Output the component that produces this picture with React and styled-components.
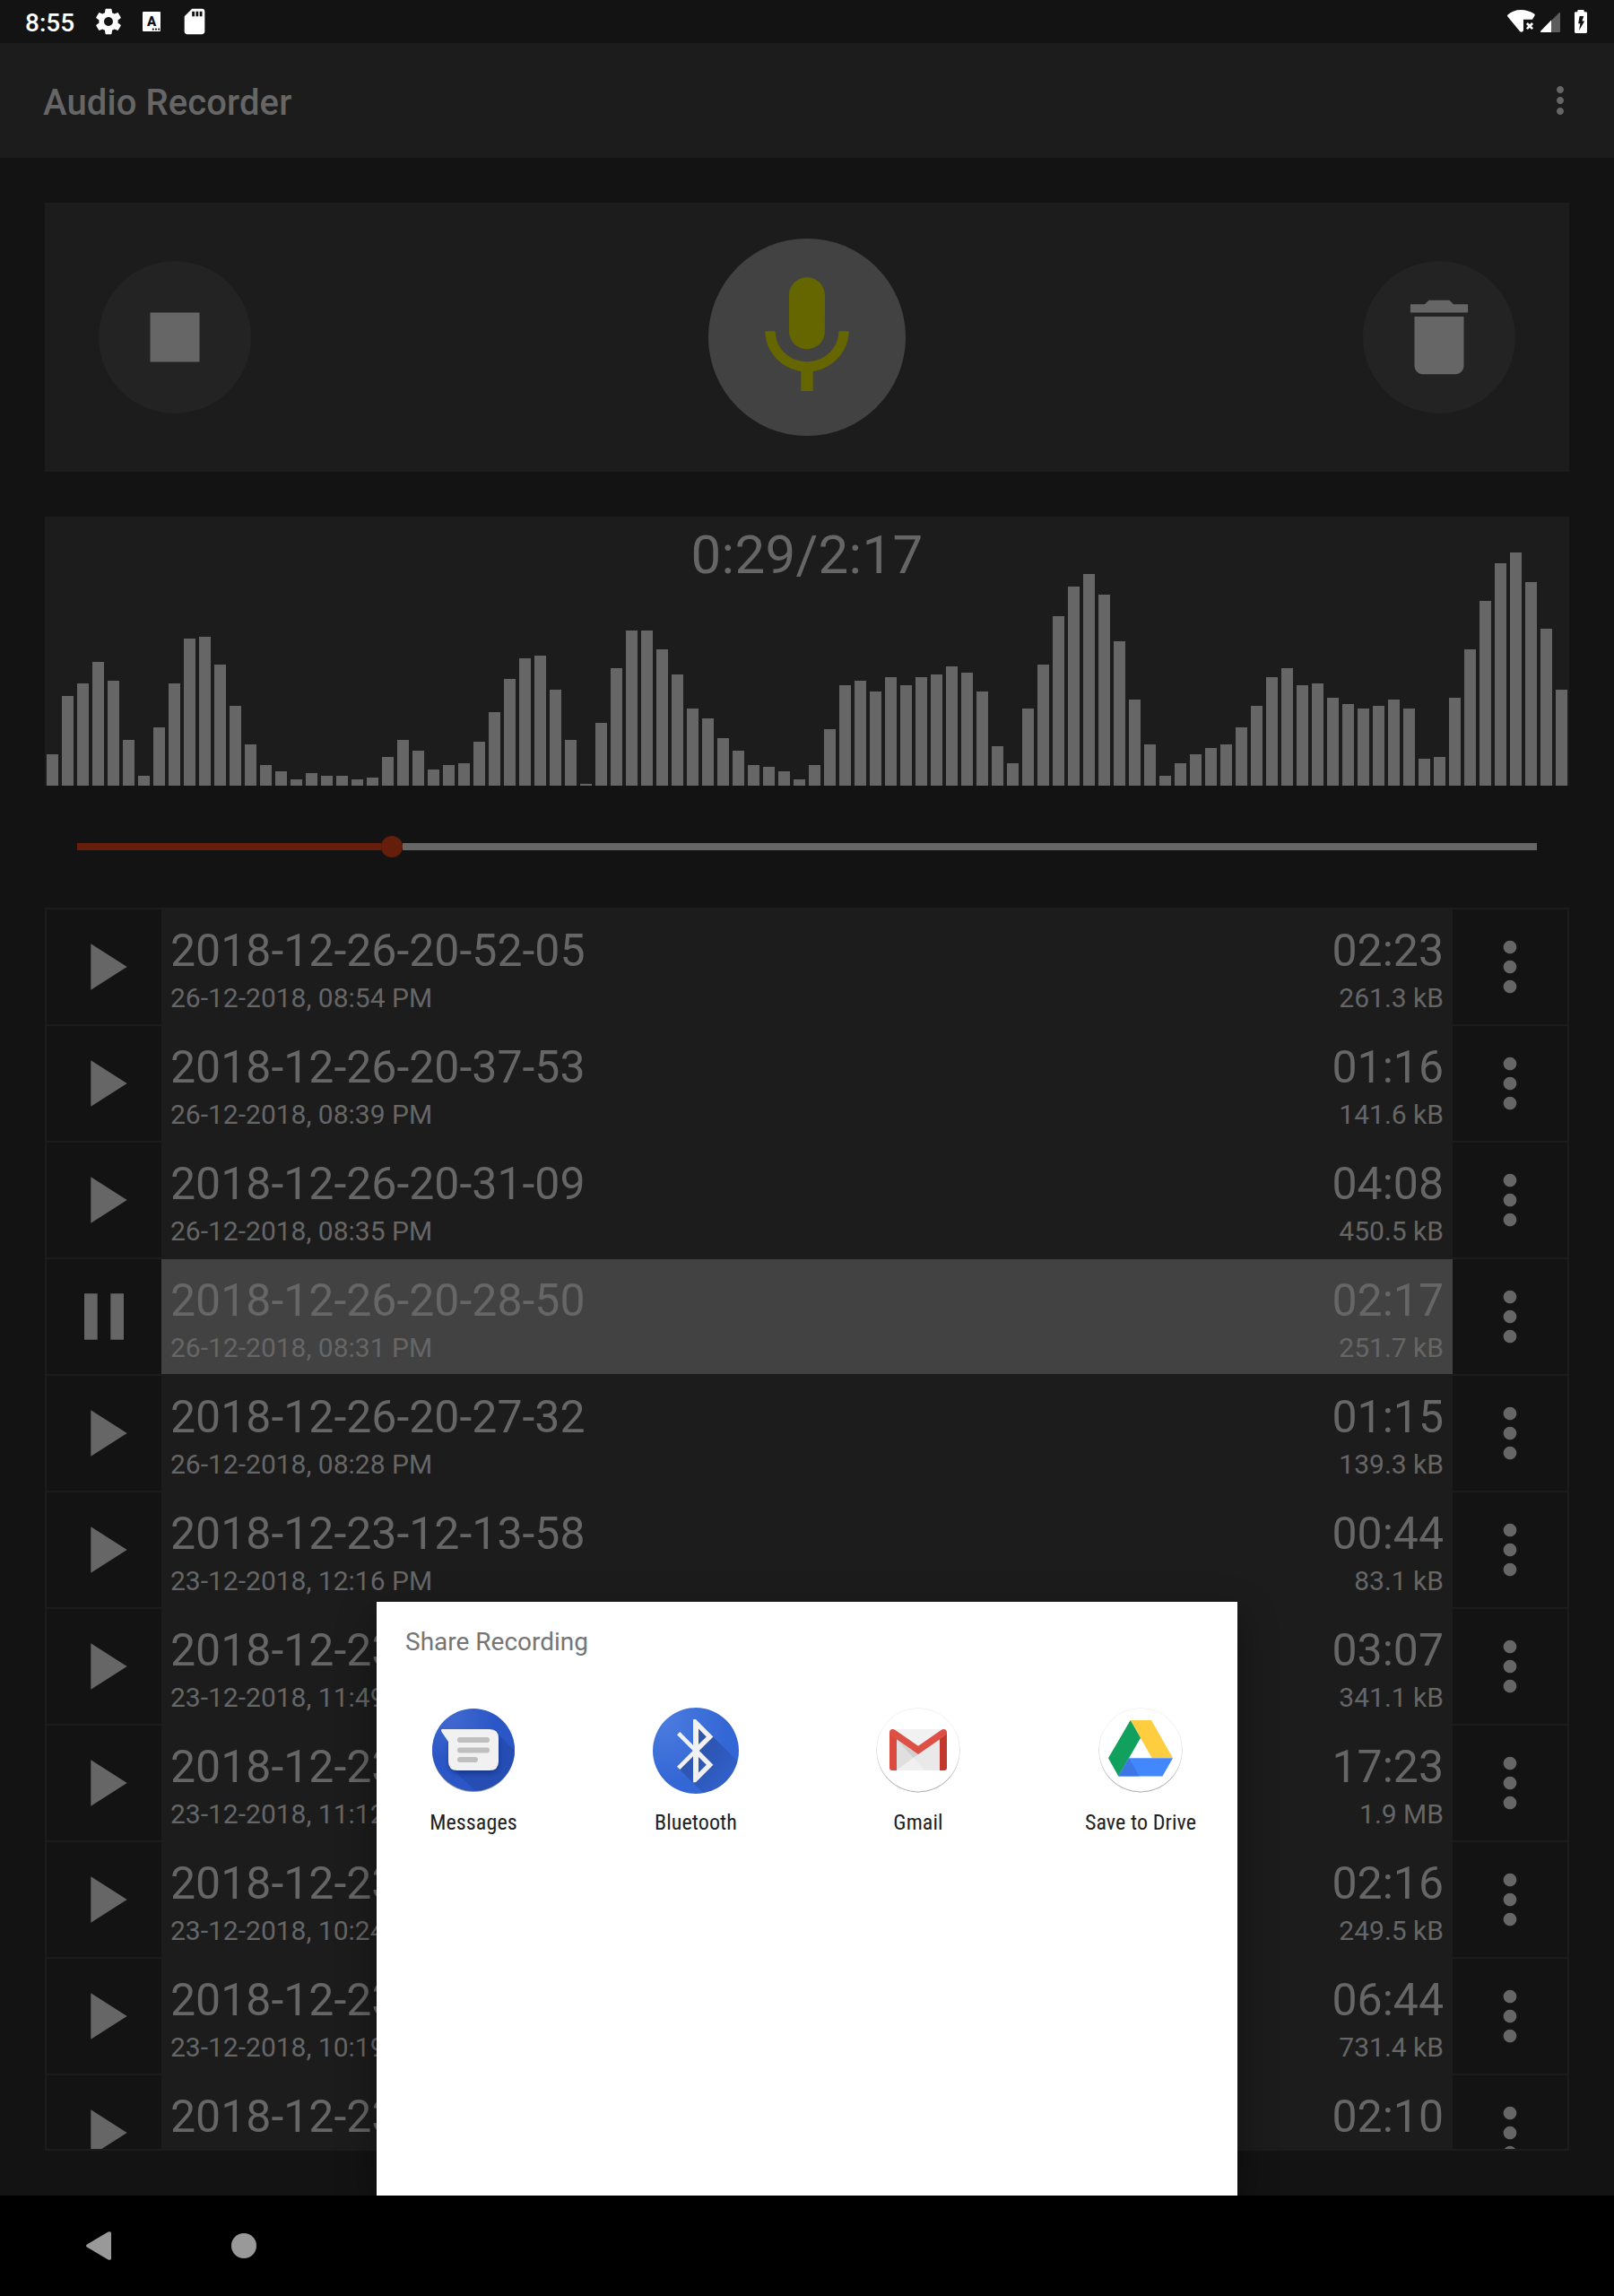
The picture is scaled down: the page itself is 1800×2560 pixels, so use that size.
import React from "react";
import styled, { createGlobalStyle } from "styled-components";

const GlobalStyle = createGlobalStyle`
  html, body { margin: 0; padding: 0; background: #131313; }
  *, *::before, *::after { box-sizing: border-box; }
`;

const Screen = styled.div`
  position: relative;
  display: flex;
  flex-direction: column;
  width: 1800px;
  height: 2560px;
  overflow: hidden;
  background: #131313;
  color: #666666;
  font-family: Roboto, "Noto Sans", sans-serif;
`;

const StatusBar = styled.header`
  display: flex;
  align-items: center;
  justify-content: space-between;
  flex: none;
  height: 48px;
  padding: 0 30px 0 28px;
  color: #ffffff;
`;

const StatusGroup = styled.div`
  display: flex;
  align-items: center;
  gap: ${(p) => p.$gap}px;
`;

const Clock = styled.span`
  width: 76px;
  padding-top: 4px;
  font-size: 28px;
  font-weight: 500;
  line-height: 34px;
`;

const Glyph = styled.svg`
  display: block;
  flex: none;
  width: ${(p) => p.$w}px;
  height: ${(p) => p.$h || p.$w}px;
`;

const AppBar = styled.div`
  display: flex;
  align-items: center;
  justify-content: space-between;
  flex: none;
  height: 128px;
  padding: 4px 36px 0 48px;
  background: #1c1c1c;
`;

const AppTitle = styled.h1`
  margin: 2px 0 0;
  font-size: 40px;
  font-weight: 500;
  letter-spacing: 0.1px;
  line-height: 48px;
`;

const AppMenu = styled.div`
  margin-top: -4px;
`;

const Content = styled.main`
  display: flex;
  flex-direction: column;
  flex: 1;
  min-height: 0;
  padding: 50px;
`;

const Controls = styled.section`
  display: flex;
  align-items: center;
  justify-content: space-between;
  flex: none;
  height: 300px;
  padding: 0 60px;
  background: #1c1c1c;
`;

const RoundButton = styled.div`
  display: flex;
  align-items: center;
  justify-content: center;
  width: ${(p) => p.$size}px;
  height: ${(p) => p.$size}px;
  border-radius: 50%;
  background: ${(p) => (p.$active ? "#424242" : "#232323")};
  color: ${(p) => (p.$active ? "#666600" : "#666666")};
`;

const WavePanel = styled.section`
  display: grid;
  flex: none;
  height: 300px;
  margin-top: 50px;
  background: #1c1c1c;
`;

const Timer = styled.div`
  grid-area: 1 / 1;
  justify-self: center;
  margin-top: 7px;
  font-size: 60px;
  letter-spacing: 0.3px;
  line-height: 72px;
`;

const Bars = styled.div`
  grid-area: 1 / 1;
  display: flex;
  align-items: flex-end;
  gap: 4px;
  padding: 0 2px;
`;

const Bar = styled.i`
  flex: none;
  width: 13px;
  background: #666666;
`;

const Seek = styled.div`
  display: flex;
  align-items: center;
  flex: none;
  height: 24px;
  margin: 56px 36px;
`;

const Played = styled.div`
  width: 339px;
  height: 8px;
  background: #661e0c;
`;

const Thumb = styled.div`
  width: 24px;
  height: 24px;
  border-radius: 50%;
  background: #661e0c;
`;

const Remaining = styled.div`
  flex: 1;
  height: 8px;
  background: #666666;
`;

const List = styled.section`
  flex: 1;
  min-height: 0;
  overflow: hidden;
  border: 2px solid #1c1c1c;
`;

const Row = styled.div`
  display: grid;
  grid-template-columns: 128px 1fr 128px;
  height: 130px;
  border-bottom: 2px solid #1c1c1c;
`;

const Cell = styled.div`
  display: flex;
  align-items: center;
  justify-content: center;
`;

const Info = styled.div`
  display: flex;
  justify-content: space-between;
  padding: 16px 10px 0;
  background: ${(p) => (p.$playing ? "#424242" : "#1c1c1c")};
`;

const Lines = styled.div`
  display: flex;
  flex-direction: column;
  gap: 5px;
  text-align: ${(p) => (p.$end ? "right" : "left")};
  white-space: nowrap;
`;

const Primary = styled.div`
  font-size: 50px;
  line-height: 60px;
`;

const Secondary = styled.div`
  font-size: 30px;
  line-height: 36px;
`;

const NavBar = styled.footer`
  position: relative;
  z-index: 2;
  display: flex;
  align-items: center;
  flex: none;
  gap: 134px;
  height: 112px;
  padding-left: 96px;
  background: #000000;
`;

const HomeDot = styled.div`
  width: 28px;
  height: 28px;
  border-radius: 50%;
  background: #999999;
`;

const Sheet = styled.div`
  position: absolute;
  z-index: 1;
  left: 420px;
  bottom: 112px;
  width: 960px;
  height: 662px;
  background: #ffffff;
  box-shadow: 0 16px 40px rgba(0, 0, 0, 0.4);
`;

const SheetTitle = styled.div`
  padding: 28px 32px 0;
  color: #757575;
  font-size: 28px;
  line-height: 34px;
`;

const Targets = styled.div`
  display: grid;
  grid-template-columns: repeat(4, 216px);
  gap: 32px;
  margin-top: 56px;
`;

const Target = styled.div`
  display: flex;
  flex-direction: column;
  align-items: center;
`;

const TargetName = styled.div`
  margin-top: 17px;
  color: #212121;
  font-family: "Roboto Condensed", Roboto, sans-serif;
  font-size: 24px;
  font-stretch: condensed;
  letter-spacing: 0.1px;
  line-height: 30px;
  white-space: nowrap;
`;

const MATERIAL = {
  play: "M8 5v14l11-7z",
  pause: "M6 19h4V5H6v14zm8-14v14h4V5h-4z",
  stop: "M6 6h12v12H6z",
  more: "M12 8c1.1 0 2-.9 2-2s-.9-2-2-2-2 .9-2 2 .9 2 2 2zm0 2c-1.1 0-2 .9-2 2s.9 2 2 2 2-.9 2-2-.9-2-2-2zm0 6c-1.1 0-2 .9-2 2s.9 2 2 2 2-.9 2-2-.9-2-2-2z",
  mic: "M12 14c1.66 0 2.99-1.34 2.99-3L15 5c0-1.66-1.34-3-3-3S9 3.34 9 5v6c0 1.66 1.34 3 3 3zm5.3-3c0 3-2.54 5.1-5.3 5.1S6.7 14 6.7 11H5c0 3.41 2.72 6.23 6 6.72V21h2v-3.28c3.28-.48 6-3.3 6-6.72h-1.7z",
  trash: "M6 19c0 1.1.9 2 2 2h8c1.1 0 2-.9 2-2V7H6v12zM19 4h-3.5l-1-1h-5l-1 1H5v2h14V4z",
  gear: "M19.43 12.98c.04-.32.07-.64.07-.98s-.03-.66-.07-.98l2.11-1.65c.19-.15.24-.42.12-.64l-2-3.46c-.12-.22-.39-.3-.61-.22l-2.49 1c-.52-.4-1.08-.73-1.69-.98l-.38-2.65C14.46 2.18 14.25 2 14 2h-4c-.25 0-.46.18-.49.42l-.38 2.65c-.61.25-1.17.59-1.69.98l-2.49-1c-.23-.09-.49 0-.61.22l-2 3.46c-.13.22-.07.49.12.64l2.11 1.65c-.04.32-.07.65-.07.98s.03.66.07.98l-2.11 1.65c-.19.15-.24.42-.12.64l2 3.46c.12.22.39.3.61.22l2.49-1c.52.4 1.08.73 1.69.98l.38 2.65c.03.24.24.42.49.42h4c.25 0 .46-.18.49-.42l.38-2.65c.61-.25 1.17-.59 1.69-.98l2.49 1c.23.09.49 0 .61-.22l2-3.46c.12-.22.07-.49-.12-.64l-2.11-1.65zM12 15.5c-1.93 0-3.5-1.57-3.5-3.5s1.57-3.5 3.5-3.5 3.5 1.57 3.5 3.5-1.57 3.5-3.5 3.5z",
  sd: "M18 2h-8L4.02 8 4 20c0 1.1.9 2 2 2h12c1.1 0 2-.9 2-2V4c0-1.1-.9-2-2-2zm-6 6h-2V4h2v4zm3 0h-2V4h2v4zm3 0h-2V4h2v4z",
};

function Icon({ name, size }) {
  return (
    <Glyph $w={size} viewBox="0 0 24 24" fill="currentColor">
      <path d={MATERIAL[name]} />
    </Glyph>
  );
}

function KeyboardIcon() {
  return (
    <Glyph $w={34} viewBox="0 0 34 34">
      <rect x="7" y="6" width="20" height="22" rx="1" fill="#ffffff" />
      <text x="17" y="22" textAnchor="middle" fontFamily="Roboto, sans-serif" fontWeight="900" fontSize="15" fill="#131313">A</text>
      <g fill="#131313">
        <circle cx="18.8" cy="25.7" r="1.1" />
        <circle cx="22" cy="25.7" r="1.1" />
        <circle cx="25.2" cy="25.7" r="1.1" />
      </g>
    </Glyph>
  );
}

function WifiIcon() {
  return (
    <Glyph $w={34} $h={28} viewBox="0 0 34 28">
      <path d="M1.2 6.8 Q7.5 1 16 1 T31.2 5.6 Q32.2 6.6 31.5 7.6 L28.9 11.7 H19 V24.2 Q16.8 27 15 25 L1.4 8.4 Q.7 7.4 1.2 6.8Z" fill="#ffffff" />
      <path d="M22.9 16 L29.1 22.2 M29.1 16 L22.9 22.2" stroke="#ffffff" strokeWidth="2.6" />
    </Glyph>
  );
}

function SignalIcon() {
  return (
    <Glyph $w={24} $h={28} viewBox="0 0 24 28">
      <path d="M13 14 L22.5 4.5 Q24 3.5 24 5 V25 Q24 26 23 26 H13Z" fill="#5c5c5c" />
      <path d="M14 12.6 V26 H3 Q1.2 26 2.3 24.4Z" fill="#ffffff" />
    </Glyph>
  );
}

function BatteryIcon() {
  return (
    <Glyph $w={14} $h={28} viewBox="0 0 14 28">
      <path d="M1.5 3.2 H3.3 V2 Q3.3 1 4.3 1 H9.7 Q10.7 1 10.7 2 V3.2 H12.5 Q14 3.2 14 4.6 V25.6 Q14 27 12.7 27 H1.3 Q0 27 0 25.6 V4.6 Q0 3.2 1.5 3.2Z" fill="#ffffff" />
      <path d="M5.6 8 H10.2 L8.4 13.6 H11.2 L5 24 L6.4 16.2 H4.2Z" fill="#131313" />
    </Glyph>
  );
}

function MessagesIcon() {
  return (
    <Glyph $w={96} viewBox="0 0 96 96">
      <defs>
        <radialGradient id="msgFace" cx="0.25" cy="0.12" r="0.9">
          <stop offset="0" stopColor="#4068cf" />
          <stop offset="0.6" stopColor="#2a56c6" />
        </radialGradient>
        <clipPath id="msgClip"><circle cx="48" cy="47" r="46" /></clipPath>
        <filter id="soft" x="-20%" y="-20%" width="140%" height="140%"><feGaussianBlur stdDeviation="2.4" /></filter>
        <filter id="rim" x="-20%" y="-20%" width="140%" height="140%"><feGaussianBlur stdDeviation="0.7" /></filter>
      </defs>
      <circle cx="48" cy="48" r="46" fill="#000000" opacity="0.4" filter="url(#rim)" />
      <circle cx="48" cy="47" r="46" fill="url(#msgFace)" />
      <g clipPath="url(#msgClip)">
        <path d="M73 27 L110 64 V110 H69 L23 67Z" fill="#1d3d90" opacity="0.35" />
        <rect x="21" y="30" width="55" height="43" rx="10" fill="#10265f" opacity="0.55" filter="url(#soft)" />
      </g>
      <path d="M13 24 H66 Q76 24 76 34 V60 Q76 70 66 70 H30 Q20 70 20 60 V38 L12.2 26.6 Q11.6 24 13 24Z" fill="#f1f1f1" />
      <g fill="#bfbfbf">
        <rect x="30" y="33" width="36" height="6" rx="3" />
        <rect x="30" y="44.4" width="36" height="6.2" rx="3" />
        <rect x="30" y="55" width="23" height="6" rx="3" />
      </g>
    </Glyph>
  );
}

function BluetoothIcon() {
  return (
    <Glyph $w={96} viewBox="0 0 96 96">
      <defs>
        <radialGradient id="btFace" cx="0.15" cy="0.15" r="0.9">
          <stop offset="0" stopColor="#4b7bdf" />
          <stop offset="0.8" stopColor="#3467d6" />
        </radialGradient>
        <linearGradient id="btCast" x1="0.2" y1="0.2" x2="0.85" y2="0.85">
          <stop offset="0" stopColor="#203a80" stopOpacity="0.5" />
          <stop offset="1" stopColor="#203a80" stopOpacity="0" />
        </linearGradient>
        <clipPath id="btClip"><circle cx="48" cy="48" r="48" /></clipPath>
      </defs>
      <circle cx="48" cy="48" r="48" fill="url(#btFace)" />
      <path clipPath="url(#btClip)" d="M51 23 L67.4 32.4 L110 75 V112 H73 L30 69 L45 54Z" fill="url(#btCast)" />
      <path fillRule="evenodd" fill="#f1f1f1" d="M67.4 32.4 L48 13 H45 V41.7 L30.3 27 L27 30.3 L44.7 48 L27 65.7 L30.3 69 L45 54.3 V83.2 H48 L67.4 63.8 L51.8 48.1Z M51 23.6 L59.8 32.4 L51 41.1Z M51 55.1 L59.8 63.8 L51 72.6Z" />
    </Glyph>
  );
}

function WhiteDisc() {
  return (
    <>
      <defs>
        <filter id="discRim" x="-20%" y="-20%" width="140%" height="140%"><feGaussianBlur stdDeviation="0.7" /></filter>
      </defs>
      <circle cx="48" cy="48" r="46.4" fill="#000000" opacity="0.4" filter="url(#discRim)" />
      <circle cx="48" cy="47" r="46.4" fill="#ffffff" stroke="#e9e9e9" strokeWidth="0.6" />
    </>
  );
}

function GmailIcon() {
  return (
    <Glyph $w={96} viewBox="0 0 96 96">
      <WhiteDisc />
      <rect x="18" y="24" width="60" height="46" fill="#e9e9e9" />
      <path d="M20 24 H76 L48 43Z" fill="#f1f1f1" />
      <path d="M24 36 L42.6 56 L24 70Z" fill="#dfdfdf" />
      <path d="M24 36 L48 52 L42.6 56Z" fill="#cfcfcf" />
      <path d="M24 70 L42.6 56 L56 70Z" fill="#f0f0f0" />
      <path d="M16 27 L24 32 V70 H19 Q16 70 16 67Z" fill="#da4a3f" />
      <path d="M80 27 L72 32 V70 H77 Q80 70 80 67Z" fill="#c3382c" />
      <path d="M16 28 Q16 24 19.6 24 Q21 24 22.4 25 L48 42.7 L73.6 25 Q75 24 76.4 24 Q80 24 80 28 Q80 30 77.6 31.6 L48 52 L18.4 31.6 Q16 30 16 28Z" fill="#de5045" />
    </Glyph>
  );
}

function DriveIcon() {
  return (
    <Glyph $w={96} viewBox="0 0 96 96">
      <WhiteDisc />
      <path d="M36.7 14 H60 L84 56.3 H60.7Z" fill="#ffcd40" />
      <path d="M36.7 14 L48 33.7 L23.3 76.5 L12 56.3Z" fill="#11a05d" />
      <path d="M35 56.3 H84 L72.4 76.5 H23.3Z" fill="#4387fd" />
      <path d="M35 56.3 L46.6 76.5 H23.3Z" fill="#3b70dc" opacity="0.75" />
    </Glyph>
  );
}

function BackIcon() {
  return (
    <Glyph $w={28} $h={32} viewBox="0 0 28 32">
      <path d="M1 14.4 L24.6 .6 Q28 -.8 28 2 V30 Q28 32.8 24.6 31.4 L1 17.6 Q-1 16 1 14.4Z" fill="#999999" />
    </Glyph>
  );
}

const LEVELS = [
  35, 100, 114, 138, 117, 51, 11, 65, 114, 164, 166, 135, 89, 46, 23, 16, 7, 14, 11, 11,
  7, 9, 32, 51, 39, 18, 23, 25, 49, 82, 119, 142, 145, 107, 51, 2, 70, 131, 173, 173,
  152, 124, 86, 75, 53, 39, 23, 21, 16, 7, 23, 63, 112, 117, 105, 121, 112, 121, 124, 133,
  126, 105, 44, 25, 86, 135, 189, 222, 236, 213, 161, 96, 46, 11, 25, 35, 42, 46, 65, 89,
  121, 131, 112, 114, 98, 91, 86, 89, 96, 86, 30, 32, 98, 152, 206, 248, 260, 227, 175, 107,
];

const RECORDINGS = [
  { name: "2018-12-26-20-52-05", date: "26-12-2018, 08:54 PM", length: "02:23", size: "261.3 kB" },
  { name: "2018-12-26-20-37-53", date: "26-12-2018, 08:39 PM", length: "01:16", size: "141.6 kB" },
  { name: "2018-12-26-20-31-09", date: "26-12-2018, 08:35 PM", length: "04:08", size: "450.5 kB" },
  { name: "2018-12-26-20-28-50", date: "26-12-2018, 08:31 PM", length: "02:17", size: "251.7 kB", playing: true },
  { name: "2018-12-26-20-27-32", date: "26-12-2018, 08:28 PM", length: "01:15", size: "139.3 kB" },
  { name: "2018-12-23-12-13-58", date: "23-12-2018, 12:16 PM", length: "00:44", size: "83.1 kB" },
  { name: "2018-12-23", date: "23-12-2018, 11:49", length: "03:07", size: "341.1 kB" },
  { name: "2018-12-23", date: "23-12-2018, 11:12", length: "17:23", size: "1.9 MB" },
  { name: "2018-12-23", date: "23-12-2018, 10:24", length: "02:16", size: "249.5 kB" },
  { name: "2018-12-23", date: "23-12-2018, 10:19", length: "06:44", size: "731.4 kB" },
  { name: "2018-12-23", length: "02:10" },
];

const TARGETS = [
  { name: "Messages", Art: MessagesIcon },
  { name: "Bluetooth", Art: BluetoothIcon },
  { name: "Gmail", Art: GmailIcon },
  { name: "Save to Drive", Art: DriveIcon },
];

function Recording({ item }) {
  return (
    <Row>
      <Cell><Icon name={item.playing ? "pause" : "play"} size={88} /></Cell>
      <Info $playing={item.playing}>
        <Lines>
          <Primary>{item.name}</Primary>
          {item.date && <Secondary>{item.date}</Secondary>}
        </Lines>
        <Lines $end>
          <Primary>{item.length}</Primary>
          {item.size && <Secondary>{item.size}</Secondary>}
        </Lines>
      </Info>
      <Cell><Icon name="more" size={88} /></Cell>
    </Row>
  );
}

export default function App() {
  return (
    <>
      <GlobalStyle />
      <Screen>
        <StatusBar>
          <StatusGroup $gap={0}>
            <Clock>8:55</Clock>
            <StatusGroup $gap={14}>
              <Icon name="gear" size={34} />
              <KeyboardIcon />
              <Icon name="sd" size={34} />
            </StatusGroup>
          </StatusGroup>
          <StatusGroup $gap={2}>
            <WifiIcon />
            <StatusGroup $gap={16}>
              <SignalIcon />
              <BatteryIcon />
            </StatusGroup>
          </StatusGroup>
        </StatusBar>

        <AppBar>
          <AppTitle>Audio Recorder</AppTitle>
          <AppMenu><Icon name="more" size={48} /></AppMenu>
        </AppBar>

        <Content>
          <Controls>
            <RoundButton $size={170}><Icon name="stop" size={110} /></RoundButton>
            <RoundButton $size={220} $active><Icon name="mic" size={160} /></RoundButton>
            <RoundButton $size={170}><Icon name="trash" size={110} /></RoundButton>
          </Controls>

          <WavePanel>
            <Bars>
              {LEVELS.map((level, i) => (
                <Bar key={i} style={{ height: level }} />
              ))}
            </Bars>
            <Timer>0:29/2:17</Timer>
          </WavePanel>

          <Seek>
            <Played />
            <Thumb />
            <Remaining />
          </Seek>

          <List>
            {RECORDINGS.map((item, i) => (
              <Recording key={i} item={item} />
            ))}
          </List>
        </Content>

        <NavBar>
          <BackIcon />
          <HomeDot />
        </NavBar>

        <Sheet>
          <SheetTitle>Share Recording</SheetTitle>
          <Targets>
            {TARGETS.map(({ name, Art }) => (
              <Target key={name}>
                <Art />
                <TargetName>{name}</TargetName>
              </Target>
            ))}
          </Targets>
        </Sheet>
      </Screen>
    </>
  );
}
